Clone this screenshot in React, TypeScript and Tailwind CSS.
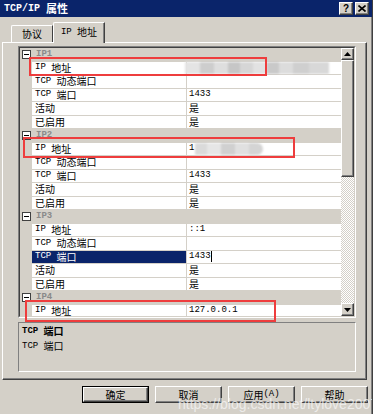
import React from 'react';

type Row = { k: string; v?: string; sel?: boolean; mask?: 'full' | 'partial' };

const tail: Row[] = [
  { k: 'TCP 动态端口' },
  { k: 'TCP 端口', v: '1433' },
  { k: '活动', v: '是' },
  { k: '已启用', v: '是' },
];

const sections: { name: string; rows: Row[] }[] = [
  { name: 'IP1', rows: [{ k: 'IP 地址', mask: 'full' }, ...tail] },
  { name: 'IP2', rows: [{ k: 'IP 地址', v: '1', mask: 'partial' }, ...tail] },
  {
    name: 'IP3',
    rows: [
      { k: 'IP 地址', v: '::1' },
      { k: 'TCP 动态端口' },
      { k: 'TCP 端口', v: '1433', sel: true },
      { k: '活动', v: '是' },
      { k: '已启用', v: '是' },
    ],
  },
  { name: 'IP4', rows: [{ k: 'IP 地址', v: '127.0.0.1' }, ...tail] },
];

// ascii runs get the narrow mono face, cjk runs the 10px cjk face
const Txt = ({ s }: { s: string }) => (
  <>
    {s
      .split(/([\x20-\x7e]+)/)
      .filter(Boolean)
      .map((p, i) =>
        /^[\x20-\x7e]+$/.test(p) ? (
          <span key={i} className="font-['Liberation_Mono',monospace] text-[9px] whitespace-pre">
            {p}
          </span>
        ) : (
          <span key={i} className="text-[10px]">
            {p}
          </span>
        )
      )}
  </>
);

const fullMask = [
  ['w-[15px]', 'bg-[#e4e4e4]'],
  ['w-[14px]', 'bg-[#cdcdcd]'],
  ['w-[14px]', 'bg-[#dedede]'],
  ['w-[12px]', 'bg-[#c6c6c6]'],
  ['w-[13px]', 'bg-[#d6d6d6]'],
  ['w-[14px]', 'bg-[#e2e2e2]'],
  ['w-[12px]', 'bg-[#c9c9c9]'],
  ['w-[14px]', 'bg-[#dcdcdc]'],
  ['w-[16px]', 'bg-[#cfcfcf]'],
  ['w-[20px]', 'bg-[#d8d8d8]'],
];

const partMask = [
  ['w-[12px]', 'bg-[#dadada]'],
  ['w-[14px]', 'bg-[#e6e6e6]'],
  ['w-[14px]', 'bg-[#d0d0d0]'],
  ['w-[14px]', 'bg-[#e0e0e0]'],
  ['w-[14px]', 'bg-[#d4d4d4]'],
];

const Mask = ({ kind }: { kind: 'full' | 'partial' }) => (
  <div
    className={
      'absolute top-0 bottom-0 flex blur-[1px] rounded-r-[6px] overflow-hidden ' +
      (kind === 'full' ? 'left-[-2px] right-[1px]' : 'left-[8px]')
    }
  >
    {(kind === 'full' ? fullMask : partMask).map(([w, c], i) => (
      <div key={i} className={`${w} ${c} h-full`} />
    ))}
  </div>
);

const Raised = ({ className = '', children }: { className?: string; children?: React.ReactNode }) => (
  <div
    className={
      'border border-t-white border-l-white border-r-[#404040] border-b-[#404040] bg-[#d4d0c8] shadow-[inset_-1px_-1px_#808080] ' +
      className
    }
  >
    {children}
  </div>
);

const Arrow = ({ up }: { up?: boolean }) => (
  <svg width="7" height="4" viewBox="0 0 7 4">
    <path d={up ? 'M3.5 0 L7 4 L0 4 Z' : 'M0 0 L7 0 L3.5 4 Z'} fill="#000" />
  </svg>
);

const MinusBox = () => (
  <div className="w-[9px] h-[9px] border border-[#404040] bg-white flex items-center justify-center">
    <div className="w-[5px] h-px bg-black" />
  </div>
);

const Grid = () => (
  <div className="w-[338px] h-[272px] border border-t-[#808080] border-l-[#808080] border-r-white border-b-white">
    <div className="w-full h-full border border-t-[#404040] border-l-[#404040] border-r-[#d4d0c8] border-b-[#d4d0c8] flex bg-[#d4d0c8]">
      <div className="flex-1 overflow-hidden">
        {sections.map((sec) => (
          <div key={sec.name}>
            <div className="h-[13.5px] flex items-center bg-[#d4d0c8]">
              <div className="w-[12px] pl-[2px] flex items-center">
                <MinusBox />
              </div>
              <span className="pl-[4px] font-['Liberation_Mono',monospace] text-[9px] font-bold text-[#8a8a8a] leading-none">
                {sec.name}
              </span>
            </div>
            {sec.rows.map((r, i) => (
              <div key={i} className="h-[13.5px] flex">
                <div className="w-[12px] shrink-0 bg-[#d4d0c8]" />
                <div
                  className={
                    'w-[154px] shrink-0 flex items-center pl-[3px] leading-none border-b border-[#d4d0c8] ' +
                    (r.sel ? 'bg-[#0a246a] text-white' : 'bg-white')
                  }
                >
                  <Txt s={r.k} />
                </div>
                <div className="flex-1 relative flex items-center pl-[2px] leading-none bg-white border-b border-l border-[#d4d0c8]">
                  {r.v && <Txt s={r.v} />}
                  {r.sel && <div className="w-px h-[11px] bg-black" />}
                  {r.mask && <Mask kind={r.mask} />}
                </div>
              </div>
            ))}
          </div>
        ))}
      </div>
      <div className="w-[13px] flex flex-col">
        <Raised className="h-[12px] flex items-center justify-center">
          <Arrow up />
        </Raised>
        <Raised className="h-[117px]" />
        <div className="flex-1 bg-[repeating-conic-gradient(#ffffff_0%_25%,#d4d0c8_0%_50%)] bg-[length:2px_2px]" />
        <Raised className="h-[13px] flex items-center justify-center">
          <Arrow />
        </Raised>
      </div>
    </div>
  </div>
);

const Btn = ({ label, def }: { label: string; def?: boolean }) => (
  <div className={'w-[67px] h-[17px] ' + (def ? 'border border-black' : '')}>
    <Raised className="w-full h-full flex items-center justify-center leading-none">
      <Txt s={label} />
    </Raised>
  </div>
);

export default function App() {
  return (
    <div className="relative w-[373px] h-[414px] overflow-hidden bg-[#d4d0c8] text-black font-['Noto_Sans_CJK_SC',sans-serif] border-r border-[#404040] shadow-[inset_-1px_0_#808080]">
      {/* title bar */}
      <div className="h-[17px] bg-[#0a246a] flex items-center justify-between pl-[4px] pr-[3px]">
        <div className="text-white font-bold flex items-center leading-none">
          <span className="font-['Liberation_Mono',monospace] text-[10px] whitespace-pre">TCP/IP </span>
          <span className="text-[11px]">属性</span>
        </div>
        <div className="flex gap-[2px]">
          <Raised className="w-[14px] h-[13px] flex items-center justify-center text-[10px] font-bold leading-none font-['Liberation_Sans',sans-serif]">
            ?
          </Raised>
          <Raised className="w-[14px] h-[13px] flex items-center justify-center">
            <svg width="8" height="7" viewBox="0 0 8 7">
              <path d="M0.5 0.5 L7.5 6.5 M7.5 0.5 L0.5 6.5" stroke="#000" strokeWidth="1.6" />
            </svg>
          </Raised>
        </div>
      </div>

      <div className="px-[2px] pt-[5px]">
        {/* tabs */}
        <div className="flex items-end h-[20px] pl-[9px]">
          <div className="w-[42px] h-[17px] border-t border-l border-white border-r border-r-[#404040] rounded-tl-[2px] flex items-center justify-center leading-none">
            <Txt s="协议" />
          </div>
          <div className="relative z-10 -mb-px w-[52px] h-[21px] bg-[#d4d0c8] border-t border-l border-white border-r border-r-[#404040] shadow-[inset_-1px_0_#808080] rounded-tl-[2px] flex items-center justify-center leading-none pb-[2px]">
            <Txt s="IP 地址" />
          </div>
        </div>

        {/* panel */}
        <div className="w-[365px] h-[338px] border border-t-white border-l-white border-r-[#404040] border-b-[#404040] shadow-[inset_-1px_-1px_#808080] pl-[15px] pt-[3px]">
          <Grid />
          <div className="mt-[4px] w-[338px] h-[50px] border border-t-[#808080] border-l-[#808080] border-r-white border-b-white pl-[3px] pt-[1px] flex flex-col gap-[2px] leading-[12px]">
            <div className="font-bold h-[13px] flex items-center">
              <Txt s="TCP 端口" />
            </div>
            <div className="h-[13px] flex items-center">
              <Txt s="TCP 端口" />
            </div>
          </div>
        </div>

        {/* buttons */}
        <div className="flex justify-end gap-[6px] pr-[2px] mt-[6px]">
          <Btn label="确定" def />
          <Btn label="取消" />
          <Btn label="应用(A)" />
          <Btn label="帮助" />
        </div>
      </div>

      {/* red annotation boxes */}
      <div className="absolute left-[29px] top-[57px] w-[238px] h-[19px] border-2 border-[#ee3d3d]" />
      <div className="absolute left-[23px] top-[137px] w-[272px] h-[21px] border-2 border-[#ee3d3d]" />
      <div className="absolute left-[25px] top-[300px] w-[251px] h-[22px] border-2 border-[#ee3d3d]" />

      {/* watermark */}
      <div className="absolute left-[178px] top-[397px] whitespace-nowrap font-['Liberation_Sans',sans-serif] text-[14px] leading-none text-[#f6f6f6]/75">
        https://blog.csdn.net/ltylove2007
      </div>
    </div>
  );
}
